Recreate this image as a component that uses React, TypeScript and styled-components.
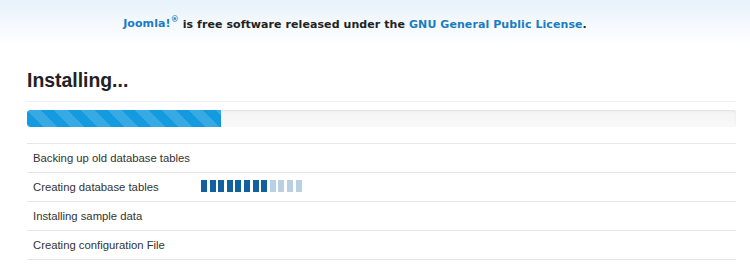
import React from "react";
import styled, { createGlobalStyle } from "styled-components";

const Global = createGlobalStyle`
  html, body { margin: 0; padding: 0; background: #fff; }
  body { font-family: "Liberation Sans", Arial, sans-serif; color: #333; }
`;

const Header = styled.header`
  height: 46px;
  display: flex;
  align-items: center;
  justify-content: center;
  padding-right: 40px;
  background: linear-gradient(to bottom, #e7f2fb 0%, #f6fafd 60%, #ffffff 100%);
  font-family: "DejaVu Sans", Verdana, sans-serif;
  font-size: 11px;
  font-weight: bold;
  letter-spacing: 0.08px;
  color: #222;
`;

const Link = styled.a`
  color: #1b7cc2;
  text-decoration: none;
`;

const Reg = styled.sup`
  font-size: 8px;
`;

const Main = styled.main`
  padding: 0 14px 0 27px;
`;

const Title = styled.h2`
  margin: 22px 0 9px;
  font-size: 19.4px;
  line-height: 24px;
  font-weight: bold;
  color: #222;
`;

const Rule = styled.div`
  border-top: 1px solid #eeeeee;
`;

const Progress = styled.div`
  margin-top: 8px;
  height: 17px;
  border-radius: 3px;
  background: linear-gradient(to bottom, #f3f3f3, #f9f9f9);
  box-shadow: inset 0 1px 2px rgba(0, 0, 0, 0.08);
  overflow: hidden;
`;

const Bar = styled.div`
  height: 100%;
  background-color: #149bdf;
  background-image: linear-gradient(
    45deg,
    rgba(255, 255, 255, 0.15) 25%,
    transparent 25%,
    transparent 50%,
    rgba(255, 255, 255, 0.15) 50%,
    rgba(255, 255, 255, 0.15) 75%,
    transparent 75%,
    transparent
  );
  background-size: 27px 27px;
  border-radius: 3px 0 0 3px;
`;

const Steps = styled.div`
  margin-top: 16px;
  border-top: 1px solid #e6e6e6;
`;

const Step = styled.div`
  display: grid;
  grid-template-columns: 168px 1fr;
  align-items: center;
  height: 28px;
  padding: 0 6px;
  border-bottom: 1px solid #e6e6e6;
  font-size: 11.3px;
  color: #333;
`;

const Blocks = styled.div`
  display: flex;
  gap: 2.6px;
  margin-top: -3px;
`;

const Block = styled.span<{ $done: boolean }>`
  width: 6px;
  height: 12px;
  background: ${(p) => (p.$done ? "#12609f" : "#b9d0e4")};
`;

const steps = [
  "Backing up old database tables",
  "Creating database tables",
  "Installing sample data",
  "Creating configuration File",
];

export default function App() {
  const progress = 27.3;
  return (
    <>
      <Global />
      <Header>
        <span>
          <Link href="#">
            Joomla!<Reg>®</Reg>
          </Link>{" "}
          is free software released under the{" "}
          <Link href="#">GNU General Public License</Link>.
        </span>
      </Header>
      <Main>
        <Title>Installing...</Title>
        <Rule />
        <Progress>
          <Bar style={{ width: `${progress}%` }} />
        </Progress>
        <Steps>
          {steps.map((s, i) => (
            <Step key={s}>
              <span>{s}</span>
              {i === 1 ? (
                <Blocks>
                  {Array.from({ length: 12 }).map((_, j) => (
                    <Block key={j} $done={j < 8} />
                  ))}
                </Blocks>
              ) : (
                <span />
              )}
            </Step>
          ))}
        </Steps>
      </Main>
    </>
  );
}
